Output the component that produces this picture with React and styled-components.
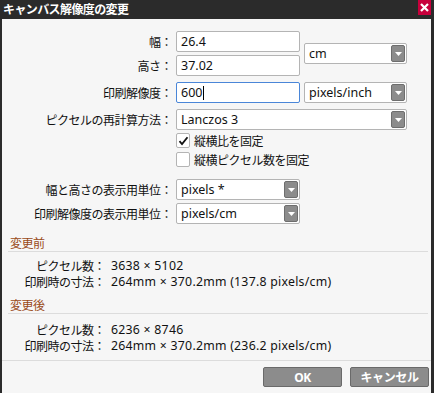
import React from "react";
import styled, { createGlobalStyle } from "styled-components";

const Global = createGlobalStyle`
  html, body { margin: 0; padding: 0; background: #2b2b2b; }
  * { box-sizing: border-box; }
`;

const JP = `"Noto Sans", "Noto Sans CJK JP", sans-serif`;

const Frame = styled.div`
  width: 434px;
  height: 393px;
  background: #2b2b2b;
  display: flex;
  flex-direction: column;
  font-family: ${JP};
  font-size: 12px;
  color: #111;
`;

const TitleBar = styled.div`
  height: 19px;
  flex: 0 0 19px;
  display: flex;
  align-items: flex-start;
  justify-content: space-between;
  padding-left: 3px;
  padding-right: 3px;
`;

const TitleText = styled.div`
  color: #fff;
  font-weight: 700;
  font-size: 12px;
  letter-spacing: -0.6px;
  line-height: 17px;
  font-family: "Noto Sans CJK JP", sans-serif;
`;

const CloseBtn = styled.div`
  width: 13px;
  height: 15px;
  background: #c8003c;
  display: flex;
  align-items: center;
  justify-content: center;
`;

const Body = styled.div`
  flex: 1;
  margin: 0 3px 0 2px;
  background: #f6f6f6;
  display: flex;
  flex-direction: column;
`;

const Form = styled.div`
  padding-top: 12px;
  display: flex;
  flex-direction: column;
`;

const Grid = styled.div`
  display: grid;
  grid-template-columns: 170px 124px 103px;
  column-gap: 4px;
  row-gap: 3px;
  margin-top: ${(p) => p.$mt || 0}px;
`;

const Label = styled.div`
  grid-column: 1;
  text-align: right;
  font-family: "Noto Sans CJK JP", sans-serif;
  letter-spacing: -0.5px;
  line-height: 21px;
  height: 21px;
  white-space: nowrap;
`;

const Field = styled.div`
  height: 21px;
  background: #fff;
  border: 1px solid ${(p) => (p.$focus ? "#4a86d8" : "#b4b4b4")};
  border-radius: 2px;
  padding-left: 4px;
  display: flex;
  align-items: center;
  font-size: 12.5px;
  color: #111;
  grid-column: ${(p) => p.$col || "auto"};
  grid-row: ${(p) => p.$row || "auto"};
  align-self: ${(p) => p.$align || "stretch"};
  position: relative;
`;

const Caret = styled.span`
  display: inline-block;
  width: 1px;
  height: 14px;
  background: #000;
  margin-left: 1px;
`;

const DropBtn = styled.div`
  position: absolute;
  right: 1px;
  top: 1px;
  width: 14px;
  height: 17px;
  background: #8c8c8c;
  border: 1px solid #6e6e6e;
  border-radius: 2px;
  display: flex;
  align-items: center;
  justify-content: center;
`;

const CheckRow = styled.div`
  grid-column: 2 / 4;
  display: flex;
  align-items: center;
  gap: 4px;
  height: 15px;
  margin-top: ${(p) => p.$mt || 0}px;
  font-family: "Noto Sans CJK JP", sans-serif;
  letter-spacing: -0.5px;
`;

const Box = styled.div`
  width: 14px;
  height: 15px;
  background: #fff;
  border: 1px solid #b4b4b4;
  border-radius: 2px;
  display: flex;
  align-items: center;
  justify-content: center;
  flex: 0 0 auto;
`;

const Section = styled.div`
  margin: ${(p) => p.$mt || 0}px 3px 0 6px;
`;

const Heading = styled.div`
  color: #9a4a18;
  line-height: 17px;
  padding-left: 2px;
  border-bottom: 1px solid #dcdcdc;
  font-family: "Noto Sans CJK JP", sans-serif;
  letter-spacing: -0.5px;
`;

const InfoGrid = styled.div`
  display: grid;
  grid-template-columns: 97px auto;
  column-gap: 6px;
  margin-top: ${(p) => p.$mt || 0}px;
  line-height: 16px;
`;

const InfoLabel = styled.div`
  text-align: right;
  font-family: "Noto Sans CJK JP", sans-serif;
  letter-spacing: -0.5px;
  white-space: nowrap;
`;

const InfoValue = styled.div`
  white-space: nowrap;
  font-size: 12.3px;
  letter-spacing: 0.25px;
`;

const Footer = styled.div`
  margin-top: auto;
  border-top: 1px solid #dcdcdc;
  padding: 6px 2px 6px 0;
  display: flex;
  justify-content: flex-end;
  gap: 8px;
`;

const Button = styled.div`
  width: 79px;
  height: 20px;
  background: #8c8c8c;
  border: 1px solid #6a6a6a;
  border-radius: 2px;
  color: #fff;
  font-weight: 700;
  display: flex;
  align-items: center;
  justify-content: center;
  font-family: "Noto Sans", "Noto Sans CJK JP", sans-serif;
  letter-spacing: -0.4px;
`;

const Arrow = () => (
  <svg width="7" height="4" viewBox="0 0 7 4">
    <path d="M0 0 H7 L3.5 4 Z" fill="#fff" />
  </svg>
);

const Select = ({ children, ...rest }) => (
  <Field {...rest}>
    {children}
    <DropBtn>
      <Arrow />
    </DropBtn>
  </Field>
);

const Check = ({ checked, children, mt }) => (
  <CheckRow $mt={mt}>
    <Box>
      {checked && (
        <svg width="11" height="10" viewBox="0 0 11 10">
          <path d="M1.5 5.2 L4 8 L9.5 1.2" stroke="#111" strokeWidth="1.8" fill="none" />
        </svg>
      )}
    </Box>
    <span>{children}</span>
  </CheckRow>
);

const InfoBlock = ({ title, px, size, mt, rmt }) => (
  <Section $mt={mt}>
    <Heading>{title}</Heading>
    <InfoGrid $mt={rmt}>
      <InfoLabel>ピクセル数：</InfoLabel>
      <InfoValue>{px}</InfoValue>
      <InfoLabel>印刷時の寸法：</InfoLabel>
      <InfoValue>{size}</InfoValue>
    </InfoGrid>
  </Section>
);

export default function App() {
  return (
    <>
      <Global />
      <Frame>
        <TitleBar>
          <TitleText>キャンバス解像度の変更</TitleText>
          <CloseBtn>
            <svg width="9" height="9" viewBox="0 0 9 9">
              <path d="M1 1 L8 8 M8 1 L1 8" stroke="#fff" strokeWidth="2.2" />
            </svg>
          </CloseBtn>
        </TitleBar>
        <Body>
          <Form>
            <Grid>
              <Label>幅：</Label>
              <Field $col="2" $row="1">26.4</Field>
              <Select $col="3" $row="1 / 3" $align="center">cm</Select>
              <Label>高さ：</Label>
              <Field $col="2" $row="2">37.02</Field>
            </Grid>
            <Grid $mt={6}>
              <Label>印刷解像度：</Label>
              <Field $focus>
                600<Caret />
              </Field>
              <Select>pixels/inch</Select>
            </Grid>
            <Grid $mt={6}>
              <Label>ピクセルの再計算方法：</Label>
              <Select $col="2 / 4">Lanczos 3</Select>
              <Check checked mt={0}>縦横比を固定</Check>
              <Check mt={1}>縦横ピクセル数を固定</Check>
            </Grid>
            <Grid $mt={12}>
              <Label>幅と高さの表示用単位：</Label>
              <Select $col="2">pixels *</Select>
              <Label>印刷解像度の表示用単位：</Label>
              <Select $col="2">pixels/cm</Select>
            </Grid>
          </Form>
          <InfoBlock
            title="変更前"
            px="3638 × 5102"
            size="264mm × 370.2mm (137.8 pixels/cm)"
            mt={10}
            rmt={6}
          />
          <InfoBlock
            title="変更後"
            px="6236 × 8746"
            size="264mm × 370.2mm (236.2 pixels/cm)"
            mt={6}
            rmt={8}
          />
          <Footer>
            <Button>OK</Button>
            <Button>キャンセル</Button>
          </Footer>
        </Body>
      </Frame>
    </>
  );
}
